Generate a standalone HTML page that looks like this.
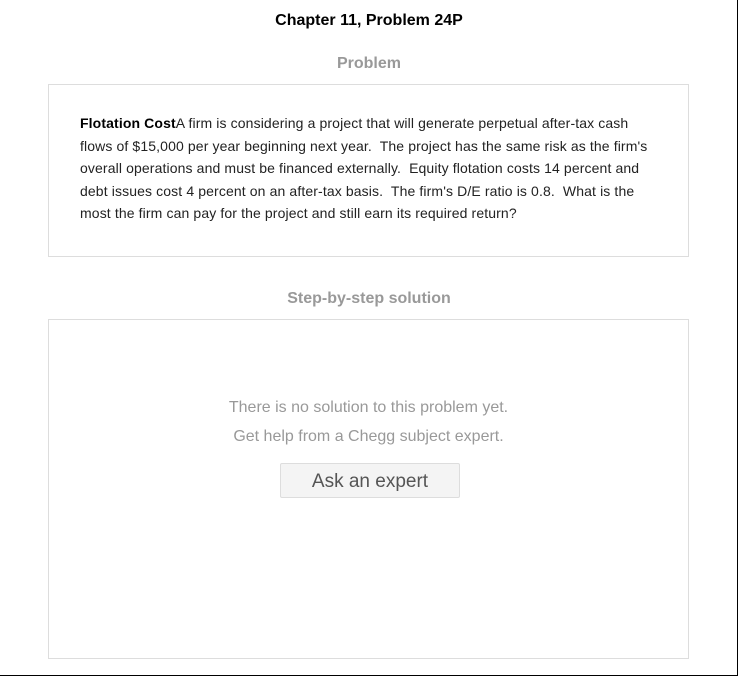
<!DOCTYPE html>
<html><head><style>
html,body{margin:0;padding:0;}
body{width:738px;height:676px;position:relative;background:#fff;font-family:"Liberation Sans",Arial,sans-serif;overflow:hidden;}
.frame{position:absolute;left:0;top:0;width:737px;height:675px;border-right:1px solid #000;border-bottom:1px solid #000;}
.title{position:absolute;left:0;width:738px;top:12px;text-align:center;font-weight:bold;font-size:16px;color:#000;}
.h{position:absolute;left:0;width:738px;text-align:center;font-weight:bold;font-size:16px;color:#999;}
.box{position:absolute;left:48px;width:639px;border:1px solid #ddd;}
.ptext{position:absolute;left:31px;top:27px;width:600px;font-size:14px;line-height:22.5px;color:#222;white-space:nowrap;letter-spacing:0.12px;}
.msg{position:absolute;left:0;width:639px;text-align:center;font-size:16px;color:#999;}
.btn{position:absolute;left:231px;top:143px;width:178px;height:33px;border:1px solid #ddd;border-radius:2px;background:#f4f4f4;color:#555;font-size:19px;text-align:center;line-height:35px;}
</style></head><body>
<div class="frame"></div>
<div class="title">Chapter 11, Problem 24P</div>
<div class="h" style="top:55px">Problem</div>
<div class="box" style="top:84px;height:171px">
<div class="ptext"><b style="color:#000">Flotation Cost</b>A firm is considering a project that will generate perpetual after-tax cash<br>flows of $15,000 per year beginning next year.&nbsp; The project has the same risk as the firm's<br>overall operations and must be financed externally.&nbsp; Equity flotation costs 14 percent and<br>debt issues cost 4 percent on an after-tax basis.&nbsp; The firm's D/E ratio is 0.8.&nbsp; What is the<br>most the firm can pay for the project and still earn its required return?</div>
</div>
<div class="h" style="top:290px">Step-by-step solution</div>
<div class="box" style="top:319px;height:338px">
<div class="msg" style="top:79px">There is no solution to this problem yet.</div>
<div class="msg" style="top:108px">Get help from a Chegg subject expert.</div>
<div class="btn">Ask an expert</div>
</div>
</body></html>
